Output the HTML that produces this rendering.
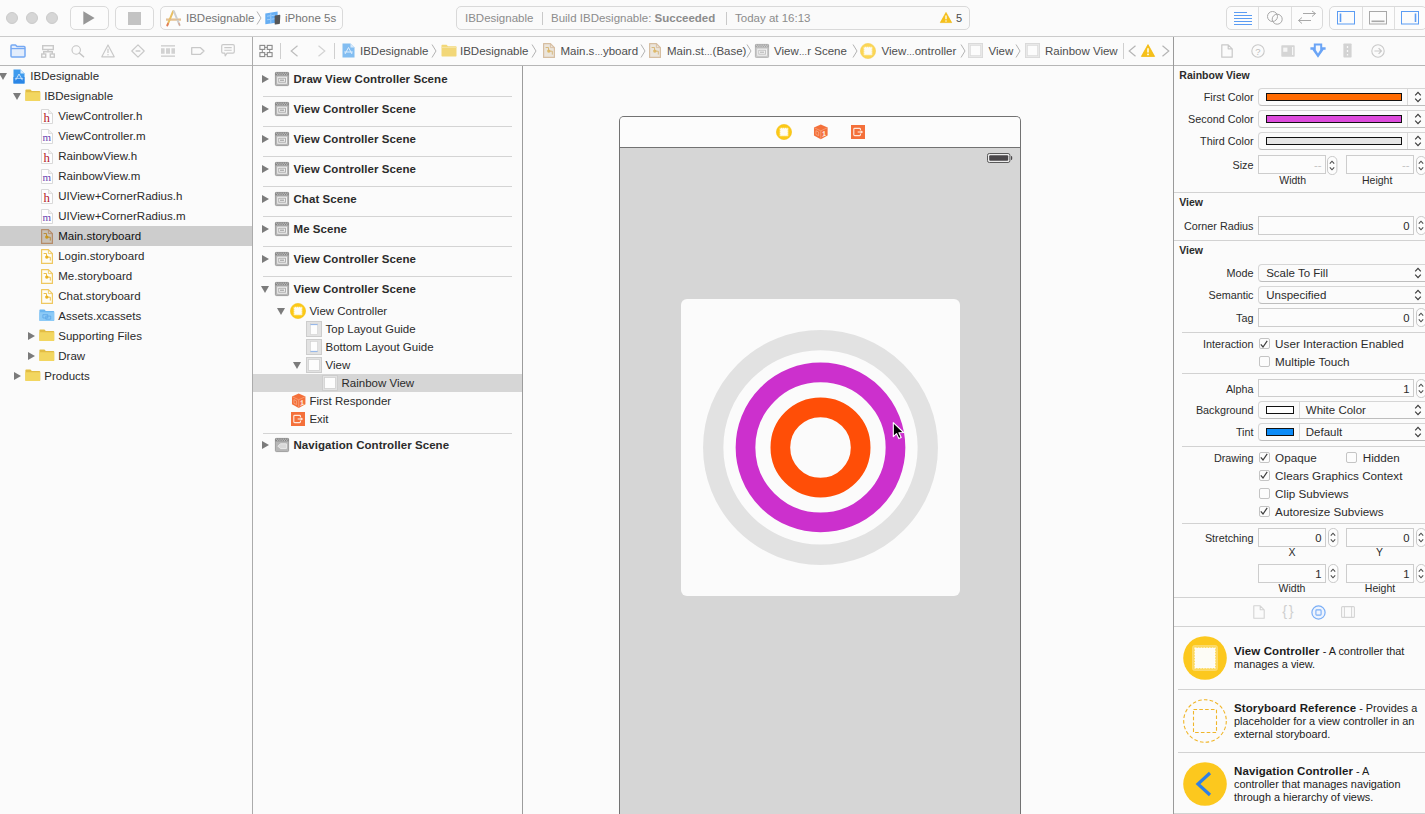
<!DOCTYPE html>
<html lang="en">
<head>
<meta charset="utf-8">
<title>IBDesignable — Main.storyboard</title>
<style>
*{box-sizing:border-box;margin:0;padding:0}
html,body{width:1425px;height:814px;overflow:hidden}
body{position:relative;background:#fbfbfb;font-family:"Liberation Sans",sans-serif;font-size:12px;color:#262626;-webkit-font-smoothing:antialiased}
.abs{position:absolute}
.t{position:absolute;white-space:nowrap;line-height:16px;height:16px}
svg{position:absolute;overflow:visible}
/* ---------- toolbar ---------- */
#toolbar{position:absolute;left:0;top:0;width:1425px;height:36px;background:#fbfbfb}
#tbline{position:absolute;left:0;top:36px;width:1425px;height:1px;background:#cbcbcb}
.tl{position:absolute;top:12px;width:12px;height:12px;border-radius:50%;background:#d6d6d6;border:1px solid #cbcbcb}
.tbtn{position:absolute;top:6px;height:24px;border:1px solid #dadada;border-radius:5px;background:#fcfcfc}
.tgrey{color:#8c8c8c}
#toolbar .t{font-size:11.5px}
.jb{top:6px;font-size:11.5px;color:#4e4e4e}
/* ---------- second bar ---------- */
#bar2{position:absolute;left:0;top:37px;width:1425px;height:28px;background:#fbfbfb}
#bar2line{position:absolute;left:0;top:65px;width:1425px;height:1px;background:#b6b6b6}
.vline{position:absolute;width:1px;background:#b9b9b9}
/* ---------- navigator ---------- */
#nav{position:absolute;left:0;top:66px;width:252px;height:748px;background:#fbfbfb}
.nrow{position:absolute;left:0;width:252px;height:20px}
.nrow .t{top:2px;font-size:11.5px;color:#2a2a2a;letter-spacing:0.04px}
.tri{position:absolute;width:0;height:0}
.tri.r{border-left:7px solid #7b7b7b;border-top:4.5px solid transparent;border-bottom:4.5px solid transparent}
.tri.d{border-top:7px solid #7b7b7b;border-left:4.5px solid transparent;border-right:4.5px solid transparent}
/* ---------- outline ---------- */
#outline{position:absolute;left:253px;top:66px;width:269px;height:748px;background:#fbfbfb}
.sep{position:absolute;left:10px;width:249px;height:1px;background:#d4d4d4}
.scene{position:absolute;left:40.5px;font-weight:bold;font-size:11.5px;letter-spacing:0.06px;color:#2b2b2b;white-space:nowrap;line-height:16px}
.orow{position:absolute;font-size:11.5px;color:#2b2b2b;white-space:nowrap;line-height:16px}
/* ---------- canvas ---------- */
#canvas{position:absolute;left:523px;top:66px;width:651px;height:748px;background:#fbfbfb;overflow:hidden}
/* ---------- inspector ---------- */
#insp{position:absolute;left:1174px;top:66px;width:251px;overflow:hidden;height:748px;background:#fbfbfb}
.lab{position:absolute;font-size:10.8px;color:#2b2b2b;white-space:nowrap;line-height:14px;text-align:right;left:0;width:79px}
.lab2{position:absolute;font-size:10.5px;color:#2b2b2b;white-space:nowrap;line-height:14px}
.hdr{position:absolute;left:4px;font-size:10.5px;font-weight:bold;color:#2b2b2b;line-height:14px;white-space:nowrap}
.fld{position:absolute;height:17px;border:1px solid #cdcdcd;background:#fcfcfc;font-size:11.3px;line-height:15px;text-align:right;padding-right:3.2px;padding-top:1px;color:#2b2b2b}
.pop{position:absolute;height:17px;border:1px solid #d6d6d6;border-bottom-color:#bdbdbd;border-radius:4px;background:#fbfbfb;font-size:12px;line-height:15px;color:#2b2b2b;padding-left:7px;white-space:nowrap}
.isep{position:absolute;height:1px;background:#d2d2d2}
.lib{font-size:10.9px;line-height:15px;color:#1c1c1c}
.lib b{font-size:11.5px;letter-spacing:0.1px}
.cb{position:absolute;width:11px;height:11px;border:1px solid #c4c4c4;border-radius:2px;background:#fcfcfc}
</style>
</head>
<body>
<div id="toolbar">
  <div class="tl" style="left:6px"></div><div class="tl" style="left:26px"></div><div class="tl" style="left:46px"></div>
  <div class="tbtn" style="left:70px;width:39px"></div>
  <svg style="left:83px;top:11px" width="12" height="14" viewBox="0 0 12 14"><path d="M0.3 0.2 L11.6 7 L0.3 13.8 Z" fill="#979797"/></svg>
  <div class="tbtn" style="left:115px;width:39px"></div>
  <div class="abs" style="left:128px;top:11.5px;width:13px;height:13px;background:#c3c3c3"></div>
  <div class="tbtn" style="left:160px;width:183px"></div>
  <!-- scheme app icon -->
  <svg style="left:165px;top:10px" width="17" height="17" viewBox="0 0 17 17">
    <path d="M1 8.2 H16 V11 H1 Z" fill="#ecd2ae"/>
    <path d="M8.2 1.2 L2.4 15.2" stroke="#e9bf63" stroke-width="2" stroke-linecap="round" fill="none"/>
    <path d="M3 13.6 L2.2 15.6" stroke="#e2785c" stroke-width="1.6" stroke-linecap="round" fill="none"/>
    <path d="M8.8 1.2 L14.6 15.2" stroke="#cfcfcf" stroke-width="2" stroke-linecap="round" fill="none"/>
    <path d="M13.6 12.8 L14.8 15.6" stroke="#d9a48e" stroke-width="1.2" fill="none"/>
    <path d="M1 9.6 H16" stroke="#dcb88e" stroke-width="0.8" fill="none"/>
  </svg>
  <div class="t" style="left:186px;top:10px;color:#757575">IBDesignable</div>
  <svg style="left:256px;top:11px" width="6" height="14" viewBox="0 0 6 14"><path d="M1 0.5 L5 7 L1 13.5" stroke="#b4b4b4" stroke-width="1" fill="none"/></svg>
  <!-- simulator icon -->
  <svg style="left:265px;top:11px" width="16" height="14" viewBox="0 0 16 14">
    <path d="M0.3 2.4 L12.6 0.6 L12.6 11.6 L0.3 13.2 Z" fill="#66aef3"/>
    <path d="M2 5.2 L5 4.8 M6.5 4.6 L10 4.1 M2 8.8 L5 8.4 M6.5 8.2 L10 7.7 M5.8 2.5 V12" stroke="#9fcdf9" stroke-width="1"/>
    <path d="M10.2 4.6 L14.6 3.8 Q15.3 3.7 15.3 4.5 L14.9 12.2 Q14.9 12.9 14.2 13 L10.4 13.6 Q9.7 13.7 9.7 13 L9.6 5.4 Q9.6 4.7 10.2 4.6 Z" fill="#565656"/>
  </svg>
  <div class="t" style="left:285px;top:10px;color:#757575">iPhone 5s</div>

  <!-- activity view -->
  <div class="tbtn" style="left:456px;width:514px;background:#fafafa;border-color:#d9d9d9"></div>
  <div class="t tgrey" style="left:465px;top:10px">IBDesignable</div>
  <div class="abs" style="left:542px;top:12px;width:1px;height:13px;background:#c9c9c9"></div>
  <div class="t tgrey" style="left:551px;top:10px">Build IBDesignable: <b>Succeeded</b></div>
  <div class="abs" style="left:726px;top:12px;width:1px;height:13px;background:#c9c9c9"></div>
  <div class="t tgrey" style="left:735px;top:10px">Today at 16:13</div>
  <svg style="left:940px;top:12px" width="12" height="11" viewBox="0 0 12 11"><path d="M6 0.4 L11.7 10.6 L0.3 10.6 Z" fill="#f6c11a" stroke="#f0b400" stroke-width="0.6" stroke-linejoin="round"/><path d="M6 3.6 L6 7.2" stroke="#fff" stroke-width="1.3"/><circle cx="6" cy="8.9" r="0.75" fill="#fff"/></svg>
  <div class="t" style="left:956px;top:10px;font-size:11px;color:#4a4a4a">5</div>

  <!-- editor segmented -->
  <div class="tbtn" style="left:1226px;width:97px"></div>
  <div class="abs" style="left:1258px;top:7px;width:1px;height:22px;background:#dedede"></div>
  <div class="abs" style="left:1291px;top:7px;width:1px;height:22px;background:#dedede"></div>
  <svg style="left:1233px;top:11px" width="20" height="15" viewBox="0 0 20 15"><path d="M1 1.5 H14 M1 4.5 H19 M1 7.5 H19 M1 10.5 H19 M1 13.5 H19" stroke="#5b9cf3" stroke-width="1"/></svg>
  <svg style="left:1266px;top:10px" width="18" height="16" viewBox="0 0 18 16"><circle cx="6.5" cy="6.5" r="5" stroke="#a8a8a8" stroke-width="1" fill="none"/><circle cx="11.2" cy="9.2" r="5" stroke="#a8a8a8" stroke-width="1" fill="none"/></svg>
  <svg style="left:1297px;top:11px" width="20" height="14" viewBox="0 0 20 14"><path d="M6 2.5 H18.5 M15 0 L18.5 2.5 L15 5.5 M1.5 9.5 H14 M5 6.5 L1.5 9.5 L5 12.5" stroke="#a8a8a8" stroke-width="1" fill="none"/></svg>
  <!-- panels segmented -->
  <div class="tbtn" style="left:1329px;width:98px"></div>
  <div class="abs" style="left:1362px;top:7px;width:1px;height:22px;background:#dedede"></div>
  <div class="abs" style="left:1394px;top:7px;width:1px;height:22px;background:#dedede"></div>
  <svg style="left:1337px;top:11px" width="18" height="14" viewBox="0 0 18 14"><rect x="0.5" y="0.5" width="17" height="12.5" stroke="#5b9cf3" fill="none"/><path d="M3.5 2.5 V11" stroke="#5b9cf3" stroke-width="1.6"/></svg>
  <svg style="left:1369px;top:11px" width="18" height="14" viewBox="0 0 18 14"><rect x="0.5" y="0.5" width="17" height="12.5" stroke="#a8a8a8" fill="none"/><path d="M2.5 10.3 H15.5" stroke="#a8a8a8" stroke-width="1.6"/></svg>
  <svg style="left:1401px;top:11px" width="18" height="14" viewBox="0 0 18 14"><rect x="0.5" y="0.5" width="17" height="12.5" stroke="#5b9cf3" fill="none"/><path d="M14.5 2.5 V11" stroke="#5b9cf3" stroke-width="1.6"/></svg>
</div>
<div id="tbline"></div>

<div id="bar2">
  <!-- navigator selector icons (coords relative to bar2: top=37) -->
  <svg style="left:10px;top:7px" width="16" height="14" viewBox="0 0 16 14"><path d="M1 2 Q1 1 2 1 H5.5 L7 2.6 H14 Q15 2.6 15 3.6 V12 Q15 13 14 13 H2 Q1 13 1 12 Z" fill="#e3edfc" stroke="#76a9f3" stroke-width="1.5" stroke-linejoin="round"/><path d="M1 4.6 H15" stroke="#76a9f3" stroke-width="1.2"/></svg>
  <svg style="left:41px;top:8px" width="14" height="13" viewBox="0 0 14 13"><rect x="1.7" y="0.7" width="10.6" height="3.8" fill="none" stroke="#c9c9c9" stroke-width="1.4"/><path d="M7 4.5 V6.7 M2.7 9 V6.7 H11.3 V9" fill="none" stroke="#c9c9c9" stroke-width="1.4"/><rect x="0.7" y="9" width="4" height="3.2" fill="none" stroke="#c9c9c9" stroke-width="1.4"/><rect x="9.3" y="9" width="4" height="3.2" fill="none" stroke="#c9c9c9" stroke-width="1.4"/></svg>
  <svg style="left:71px;top:8px" width="14" height="13" viewBox="0 0 14 13"><circle cx="5.2" cy="5" r="4.2" fill="none" stroke="#c4c4c4" stroke-width="1.1"/><path d="M8.3 8 L12.6 11.8" stroke="#c4c4c4" stroke-width="1.5" stroke-linecap="round"/></svg>
  <svg style="left:101px;top:7px" width="14" height="14" viewBox="0 0 14 14"><path d="M7 1 L13.2 12.8 H0.8 Z" fill="none" stroke="#c9c9c9" stroke-width="1.2" stroke-linejoin="round"/><path d="M7 4.8 V9" stroke="#c9c9c9" stroke-width="1.2"/><circle cx="7" cy="10.8" r="0.7" fill="#c9c9c9"/></svg>
  <svg style="left:131px;top:7px" width="14" height="14" viewBox="0 0 14 14"><path d="M7 0.9 L13.2 7 L7 13.1 L0.8 7 Z" fill="none" stroke="#c9c9c9" stroke-width="1.2" stroke-linejoin="round"/><path d="M4.6 7 H9.4" stroke="#c9c9c9" stroke-width="1.4"/></svg>
  <svg style="left:161px;top:8px" width="14" height="12" viewBox="0 0 14 12"><path d="M0 0.8 H14 M0 11.2 H14" stroke="#c9c9c9" stroke-width="1.2"/><path d="M0 3.2 H3.6 V8.8 H0 Z M5 3.2 H9 V8.8 H5 Z M10.4 3.2 H14 V8.8 H10.4 Z" fill="#d2d2d2"/></svg>
  <svg style="left:191px;top:10px" width="14" height="8" viewBox="0 0 14 8"><path d="M0.7 0.7 H9.5 L13 4 L9.5 7.3 H0.7 Z" fill="none" stroke="#c9c9c9" stroke-width="1.3" stroke-linejoin="round"/></svg>
  <svg style="left:221px;top:7px" width="14" height="13" viewBox="0 0 14 13"><path d="M2 0.7 H12 Q13.3 0.7 13.3 2 V7.8 Q13.3 9.1 12 9.1 H6 L4.2 11.8 L3.8 9.1 H2 Q0.7 9.1 0.7 7.8 V2 Q0.7 0.7 2 0.7 Z" fill="none" stroke="#c9c9c9" stroke-width="1.2" stroke-linejoin="round"/><path d="M3.3 3.6 H10.7 M3.3 6.2 H10.7" stroke="#c9c9c9" stroke-width="1.1"/></svg>

  <!-- jump bar -->
  <svg style="left:259px;top:7px" width="14" height="14" viewBox="0 0 14 14"><rect x="0.9" y="1.4" width="4.8" height="4" fill="none" stroke="#8a8a8a" stroke-width="1.1"/><rect x="8.3" y="1.4" width="4.8" height="4" fill="none" stroke="#8a8a8a" stroke-width="1.1"/><rect x="0.9" y="8.6" width="4.8" height="4" fill="none" stroke="#8a8a8a" stroke-width="1.1"/><rect x="8.3" y="8.6" width="4.8" height="4" fill="none" stroke="#8a8a8a" stroke-width="1.1"/><path d="M5.7 3.4 H8.3 M5.7 10.6 H8.3 M3.3 5.4 V8.6 M10.7 5.4 V8.6" stroke="#8a8a8a" stroke-width="1"/></svg>
  <div class="abs" style="left:280px;top:6px;width:1px;height:16px;background:#cfcfcf"></div>
  <svg style="left:290px;top:8px" width="9" height="12" viewBox="0 0 9 12"><path d="M7.5 0.8 L1.2 6 L7.5 11.2" fill="none" stroke="#bdbdbd" stroke-width="1.2"/></svg>
  <svg style="left:317px;top:8px" width="9" height="12" viewBox="0 0 9 12"><path d="M1.5 0.8 L7.8 6 L1.5 11.2" fill="none" stroke="#d3d3d3" stroke-width="1.2"/></svg>
  <div class="abs" style="left:334px;top:6px;width:1px;height:16px;background:#cfcfcf"></div>
  <!-- project icon -->
  <svg style="left:342px;top:6px;opacity:.75" width="13" height="15" viewBox="0 0 13 15"><path d="M0.5 0.5 H8.5 L12.5 4.5 V14.5 H0.5 Z" fill="#5aa9ee"/><path d="M8.5 0.5 L12.5 4.5 H8.5 Z" fill="#cfe5fa"/><path d="M3 11 L6.5 4.5 L10 11 M2.2 9 H10.8" stroke="#d6ebff" stroke-width="1" fill="none"/></svg>
  <div class="t jb" style="left:360px">IBDesignable</div>
  <svg style="left:431px;top:7px" width="6" height="14" viewBox="0 0 6 14"><path d="M1 0.5 L5 7 L1 13.5" fill="none" stroke="#b3b3b3" stroke-width="1"/></svg>
  <svg style="left:441px;top:7px;opacity:.8" width="16" height="13" viewBox="0 0 16 13"><path d="M0.5 1.5 Q0.5 0.8 1.2 0.8 H5.5 L7 2.3 H14.8 Q15.5 2.3 15.5 3 V11.8 Q15.5 12.5 14.8 12.5 H1.2 Q0.5 12.5 0.5 11.8 Z" fill="#f0cf58"/><path d="M0.5 3.4 H15.5" stroke="#f7e08e" stroke-width="1"/></svg>
  <div class="t jb" style="left:460px">IBDesignable</div>
  <svg style="left:531px;top:7px" width="6" height="14" viewBox="0 0 6 14"><path d="M1 0.5 L5 7 L1 13.5" fill="none" stroke="#b3b3b3" stroke-width="1"/></svg>
  <div class="abs" style="left:0;top:0;opacity:.72"><svg style="left:543px;top:6px" width="12" height="15" viewBox="0 0 12 15"><path d="M0.6 0.6 H7.4 L11.4 4.6 V14.4 H0.6 Z" fill="#e6ddd0" stroke="#c9a77f" stroke-width="1.2" stroke-linejoin="round"/><path d="M7.4 0.6 V4.6 H11.4" fill="none" stroke="#c9a77f" stroke-width="0.9"/><path d="M2.6 4.5 H5.5 V8 M6 8.2 H9.3 V11.6" fill="none" stroke="#c79a3f" stroke-width="0.9"/><circle cx="5.8" cy="8.1" r="1.7" fill="#d3a130"/></svg></div>
  <div class="t jb" style="left:560.5px">Main.s<span style="font-size:8.5px">…</span>yboard</div>
  <svg style="left:640px;top:7px" width="6" height="14" viewBox="0 0 6 14"><path d="M1 0.5 L5 7 L1 13.5" fill="none" stroke="#b3b3b3" stroke-width="1"/></svg>
  <div class="abs" style="left:0;top:0;opacity:.72"><svg style="left:649px;top:6px" width="12" height="15" viewBox="0 0 12 15"><path d="M0.6 0.6 H7.4 L11.4 4.6 V14.4 H0.6 Z" fill="#e6ddd0" stroke="#c9a77f" stroke-width="1.2" stroke-linejoin="round"/><path d="M7.4 0.6 V4.6 H11.4" fill="none" stroke="#c9a77f" stroke-width="0.9"/><path d="M2.6 4.5 H5.5 V8 M6 8.2 H9.3 V11.6" fill="none" stroke="#c79a3f" stroke-width="0.9"/><circle cx="5.8" cy="8.1" r="1.7" fill="#d3a130"/></svg></div>
  <div class="t jb" style="left:667px">Main.st<span style="font-size:8.5px">…</span>(Base)</div>
  <svg style="left:746px;top:7px" width="6" height="14" viewBox="0 0 6 14"><path d="M1 0.5 L5 7 L1 13.5" fill="none" stroke="#b3b3b3" stroke-width="1"/></svg>
  <div class="abs" style="left:0;top:0;opacity:.72"><svg style="left:755px;top:7px" width="14" height="14" viewBox="0 0 14 14"><rect x="0.4" y="0.4" width="13.2" height="13.2" rx="1" fill="#b6b6b6" stroke="#8f8f8f" stroke-width="0.8"/><rect x="0.4" y="0.4" width="13.2" height="2.9" fill="#7c7c7c"/><path d="M1 1.2 H13 M1.9 2.3 H13" stroke="#dcdcdc" stroke-width="0.9" stroke-dasharray="0.9 0.9"/><rect x="2.8" y="5.2" width="8.6" height="6" fill="#a8a8a8" stroke="#f6f6f6" stroke-width="1"/><rect x="4.6" y="7.1" width="5" height="2.2" fill="none" stroke="#f6f6f6" stroke-width="0.8"/></svg></div>
  <div class="t jb" style="left:774px">View<span style="font-size:8.5px">…</span>r Scene</div>
  <svg style="left:852px;top:7px" width="6" height="14" viewBox="0 0 6 14"><path d="M1 0.5 L5 7 L1 13.5" fill="none" stroke="#b3b3b3" stroke-width="1"/></svg>
  <div class="abs" style="left:0;top:0;opacity:.72"><svg style="left:860px;top:6px" width="16" height="16" viewBox="0 0 16 16"><circle cx="8" cy="8" r="7.6" fill="#fcc916" stroke="#f4bd10" stroke-width="0.6"/><rect x="3.7" y="3.7" width="8.6" height="8.6" rx="0.6" fill="#fffdf4"/><rect x="3.9" y="3.9" width="8.2" height="8.2" fill="none" stroke="#fcc916" stroke-width="0.9" stroke-dasharray="0.9 1.1"/></svg></div>
  <div class="t jb" style="left:881.5px">View<span style="font-size:8.5px">…</span>ontroller</div>
  <svg style="left:960px;top:7px" width="6" height="14" viewBox="0 0 6 14"><path d="M1 0.5 L5 7 L1 13.5" fill="none" stroke="#b3b3b3" stroke-width="1"/></svg>
  <div class="abs" style="left:0;top:0;opacity:.72"><svg style="left:968px;top:6px" width="15" height="15" viewBox="0 0 16 16"><rect x="0.5" y="0.5" width="15" height="15" fill="#e2e2e2" stroke="#cdcdcd" stroke-width="1"/><rect x="2.5" y="2.5" width="11" height="11" fill="#fdfdfd" stroke="#d0d0d0" stroke-width="0.8"/></svg></div>
  <div class="t jb" style="left:988.5px">View</div>
  <svg style="left:1015px;top:7px" width="6" height="14" viewBox="0 0 6 14"><path d="M1 0.5 L5 7 L1 13.5" fill="none" stroke="#b3b3b3" stroke-width="1"/></svg>
  <div class="abs" style="left:0;top:0;opacity:.72"><svg style="left:1025px;top:6px" width="15" height="15" viewBox="0 0 16 16"><rect x="0.5" y="0.5" width="15" height="15" fill="#e2e2e2" stroke="#cdcdcd" stroke-width="1"/><rect x="2.5" y="2.5" width="11" height="11" fill="#fdfdfd" stroke="#d0d0d0" stroke-width="0.8"/></svg></div>
  <div class="t jb" style="left:1045px">Rainbow View</div>
  <div class="abs" style="left:1123px;top:6px;width:1px;height:16px;background:#cfcfcf"></div>
  <svg style="left:1128px;top:8px" width="9" height="12" viewBox="0 0 9 12"><path d="M7.5 0.8 L1.2 6 L7.5 11.2" fill="none" stroke="#b5b5b5" stroke-width="1.2"/></svg>
  <svg style="left:1141px;top:7px" width="14" height="13" viewBox="0 0 12 11"><path d="M6 0.4 L11.7 10.6 L0.3 10.6 Z" fill="#f6c11a" stroke="#f0b400" stroke-width="0.6" stroke-linejoin="round"/><path d="M6 3.6 L6 7.2" stroke="#fff" stroke-width="1.3"/><circle cx="6" cy="8.9" r="0.75" fill="#fff"/></svg>
  <svg style="left:1161px;top:8px" width="9" height="12" viewBox="0 0 9 12"><path d="M1.5 0.8 L7.8 6 L1.5 11.2" fill="none" stroke="#b5b5b5" stroke-width="1.2"/></svg>

  <!-- inspector selector icons -->
  <svg style="left:1221px;top:7px" width="12" height="14" viewBox="0 0 12 14"><path d="M0.8 0.8 H7.2 L11.2 4.8 V13.2 H0.8 Z M7.2 0.8 V4.8 H11.2" fill="none" stroke="#c9c9c9" stroke-width="1.2" stroke-linejoin="round"/></svg>
  <svg style="left:1251px;top:7px" width="14" height="14" viewBox="0 0 14 14"><circle cx="7" cy="7" r="6.2" fill="none" stroke="#c9c9c9" stroke-width="1.1"/><text x="7" y="10.6" font-family="Liberation Sans, sans-serif" font-size="9.5" text-anchor="middle" fill="#bdbdbd">?</text></svg>
  <svg style="left:1281px;top:8px" width="14" height="12" viewBox="0 0 14 12"><rect x="0.3" y="0.3" width="13.4" height="11.4" rx="0.8" fill="#d5d5d5"/><rect x="2.2" y="2.6" width="4.2" height="4.2" fill="#f6f6f6"/><rect x="11" y="2" width="1.2" height="8" fill="#f6f6f6"/></svg>
  <svg style="left:1310px;top:6px" width="16" height="15" viewBox="0 0 16 15"><path d="M3.8 0.4 H12.2 V4.2 H15.6 V6.8 H13.6 L8 14.8 L2.4 6.8 H0.4 V4.2 H3.8 Z" fill="#6aa4f6"/><path d="M5.8 2.4 H10.2 V7 L8 10.4 L5.8 7 Z" fill="#f4f8fe"/></svg>
  <svg style="left:1343px;top:6px" width="9" height="15" viewBox="0 0 9 15"><rect x="0.4" y="0.4" width="8.2" height="14.2" rx="0.8" fill="#d3d3d3"/><path d="M4.5 3 V5 M4.5 7 V9 M4.5 11 V12.5" stroke="#f8f8f8" stroke-width="1.3"/></svg>
  <svg style="left:1371px;top:7px" width="14" height="14" viewBox="0 0 14 14"><circle cx="7" cy="7" r="6.2" fill="none" stroke="#c9c9c9" stroke-width="1.1"/><path d="M3.4 7 H10.2 M7.6 4.2 L10.4 7 L7.6 9.8" fill="none" stroke="#c9c9c9" stroke-width="1.2"/></svg>
</div>
<div id="bar2line"></div>

<div id="nav">
<div class="nrow" style="top:0px"><div class="tri d" style="left:-1.5px;top:7px"></div><svg style="left:13px;top:2.5px" width="12" height="15" viewBox="0 0 12 15"><path d="M0.5 0.5 H7.5 L11.5 4.5 V14.5 H0.5 Z" fill="#3f9bee"/><path d="M0.5 8 H11.5 V14.5 H0.5 Z" fill="#2b86e6"/><path d="M7.5 0.5 L11.5 4.5 H7.5 Z" fill="#d8ebfb"/><path d="M2.6 11.2 L6 5 L9.4 11.2 M1.8 9.3 H10.2" stroke="#cfe6fc" stroke-width="0.9" fill="none"/></svg><div class="t" style="left:30.2px">IBDesignable</div></div>
<div class="nrow" style="top:20px"><div class="tri d" style="left:12.5px;top:7px"></div><svg style="left:24.9px;top:3.3px" width="15.6" height="12.3" preserveAspectRatio="none" viewBox="0 0 16 13"><path d="M0.4 1.4 Q0.4 0.6 1.2 0.6 H5.6 L7 2 H14.8 Q15.6 2 15.6 2.8 V11.8 Q15.6 12.6 14.8 12.6 H1.2 Q0.4 12.6 0.4 11.8 Z" fill="#e2bd44"/><path d="M0.4 3.4 H15.6 V11.8 Q15.6 12.6 14.8 12.6 H1.2 Q0.4 12.6 0.4 11.8 Z" fill="#f2d660"/></svg><div class="t" style="left:44.2px">IBDesignable</div></div>
<div class="nrow" style="top:40px"><svg style="left:41px;top:2.5px" width="12" height="15" viewBox="0 0 12 15"><path d="M0.5 0.5 H7.5 L11.5 4.5 V14.5 H0.5 Z" fill="#fefefe" stroke="#d9d9d9" stroke-width="1" stroke-linejoin="round"/><path d="M7.5 0.5 V4.5 H11.5" fill="#f0f0f0" stroke="#d9d9d9" stroke-width="0.8"/><text x="5.6" y="12.7" font-family="Liberation Serif, serif" font-size="12.8" fill="#b3202a" text-anchor="middle">h</text></svg><div class="t" style="left:58.2px">ViewController.h</div></div>
<div class="nrow" style="top:60px"><svg style="left:41px;top:2.5px" width="12" height="15" viewBox="0 0 12 15"><path d="M0.5 0.5 H7.5 L11.5 4.5 V14.5 H0.5 Z" fill="#fefefe" stroke="#d9d9d9" stroke-width="1" stroke-linejoin="round"/><path d="M7.5 0.5 V4.5 H11.5" fill="#f0f0f0" stroke="#d9d9d9" stroke-width="0.8"/><text x="5.9" y="12.2" font-family="Liberation Serif, serif" font-size="11" fill="#6a3fb0" text-anchor="middle">m</text></svg><div class="t" style="left:58.2px">ViewController.m</div></div>
<div class="nrow" style="top:80px"><svg style="left:41px;top:2.5px" width="12" height="15" viewBox="0 0 12 15"><path d="M0.5 0.5 H7.5 L11.5 4.5 V14.5 H0.5 Z" fill="#fefefe" stroke="#d9d9d9" stroke-width="1" stroke-linejoin="round"/><path d="M7.5 0.5 V4.5 H11.5" fill="#f0f0f0" stroke="#d9d9d9" stroke-width="0.8"/><text x="5.6" y="12.7" font-family="Liberation Serif, serif" font-size="12.8" fill="#b3202a" text-anchor="middle">h</text></svg><div class="t" style="left:58.2px">RainbowView.h</div></div>
<div class="nrow" style="top:100px"><svg style="left:41px;top:2.5px" width="12" height="15" viewBox="0 0 12 15"><path d="M0.5 0.5 H7.5 L11.5 4.5 V14.5 H0.5 Z" fill="#fefefe" stroke="#d9d9d9" stroke-width="1" stroke-linejoin="round"/><path d="M7.5 0.5 V4.5 H11.5" fill="#f0f0f0" stroke="#d9d9d9" stroke-width="0.8"/><text x="5.9" y="12.2" font-family="Liberation Serif, serif" font-size="11" fill="#6a3fb0" text-anchor="middle">m</text></svg><div class="t" style="left:58.2px">RainbowView.m</div></div>
<div class="nrow" style="top:120px"><svg style="left:41px;top:2.5px" width="12" height="15" viewBox="0 0 12 15"><path d="M0.5 0.5 H7.5 L11.5 4.5 V14.5 H0.5 Z" fill="#fefefe" stroke="#d9d9d9" stroke-width="1" stroke-linejoin="round"/><path d="M7.5 0.5 V4.5 H11.5" fill="#f0f0f0" stroke="#d9d9d9" stroke-width="0.8"/><text x="5.6" y="12.7" font-family="Liberation Serif, serif" font-size="12.8" fill="#b3202a" text-anchor="middle">h</text></svg><div class="t" style="left:58.2px">UIView+CornerRadius.h</div></div>
<div class="nrow" style="top:140px"><svg style="left:41px;top:2.5px" width="12" height="15" viewBox="0 0 12 15"><path d="M0.5 0.5 H7.5 L11.5 4.5 V14.5 H0.5 Z" fill="#fefefe" stroke="#d9d9d9" stroke-width="1" stroke-linejoin="round"/><path d="M7.5 0.5 V4.5 H11.5" fill="#f0f0f0" stroke="#d9d9d9" stroke-width="0.8"/><text x="5.9" y="12.2" font-family="Liberation Serif, serif" font-size="11" fill="#6a3fb0" text-anchor="middle">m</text></svg><div class="t" style="left:58.2px">UIView+CornerRadius.m</div></div>
<div class="nrow" style="top:160px;background:#cdcdcd"><svg style="left:41px;top:2.5px" width="12" height="15" viewBox="0 0 12 15"><path d="M0.6 0.6 H7.4 L11.4 4.6 V14.4 H0.6 Z" fill="#c9c2b8" stroke="#b48b68" stroke-width="1.2" stroke-linejoin="round"/><path d="M7.4 0.6 V4.6 H11.4" fill="none" stroke="#b48b68" stroke-width="0.9"/><path d="M2.6 4.5 H5.5 V8 M6 8.2 H9.3 V11.6" fill="none" stroke="#b8882c" stroke-width="0.9"/><circle cx="5.8" cy="8.1" r="1.7" fill="#c8951a"/></svg><div class="t" style="left:58.2px;color:#111">Main.storyboard</div></div>
<div class="nrow" style="top:180px"><svg style="left:41px;top:2.5px" width="12" height="15" viewBox="0 0 12 15"><path d="M0.6 0.6 H7.4 L11.4 4.6 V14.4 H0.6 Z" fill="#fffdf5" stroke="#efc860" stroke-width="1.2" stroke-linejoin="round"/><path d="M7.4 0.6 V4.6 H11.4" fill="none" stroke="#efc860" stroke-width="0.9"/><path d="M2.6 4.5 H5.5 V8 M6 8.2 H9.3 V11.6" fill="none" stroke="#eab93a" stroke-width="0.9"/><circle cx="5.8" cy="8.1" r="1.7" fill="#eab220"/></svg><div class="t" style="left:58.2px">Login.storyboard</div></div>
<div class="nrow" style="top:200px"><svg style="left:41px;top:2.5px" width="12" height="15" viewBox="0 0 12 15"><path d="M0.6 0.6 H7.4 L11.4 4.6 V14.4 H0.6 Z" fill="#fffdf5" stroke="#efc860" stroke-width="1.2" stroke-linejoin="round"/><path d="M7.4 0.6 V4.6 H11.4" fill="none" stroke="#efc860" stroke-width="0.9"/><path d="M2.6 4.5 H5.5 V8 M6 8.2 H9.3 V11.6" fill="none" stroke="#eab93a" stroke-width="0.9"/><circle cx="5.8" cy="8.1" r="1.7" fill="#eab220"/></svg><div class="t" style="left:58.2px">Me.storyboard</div></div>
<div class="nrow" style="top:220px"><svg style="left:41px;top:2.5px" width="12" height="15" viewBox="0 0 12 15"><path d="M0.6 0.6 H7.4 L11.4 4.6 V14.4 H0.6 Z" fill="#fffdf5" stroke="#efc860" stroke-width="1.2" stroke-linejoin="round"/><path d="M7.4 0.6 V4.6 H11.4" fill="none" stroke="#efc860" stroke-width="0.9"/><path d="M2.6 4.5 H5.5 V8 M6 8.2 H9.3 V11.6" fill="none" stroke="#eab93a" stroke-width="0.9"/><circle cx="5.8" cy="8.1" r="1.7" fill="#eab220"/></svg><div class="t" style="left:58.2px">Chat.storyboard</div></div>
<div class="nrow" style="top:240px"><svg style="left:39.2px;top:3.3px" width="15.6" height="12.3" preserveAspectRatio="none" viewBox="0 0 16 13"><path d="M0.4 1.4 Q0.4 0.6 1.2 0.6 H5.6 L7 2 H14.8 Q15.6 2 15.6 2.8 V11.8 Q15.6 12.6 14.8 12.6 H1.2 Q0.4 12.6 0.4 11.8 Z" fill="#6bb6f0"/><path d="M0.4 3.4 H15.6 V11.8 Q15.6 12.6 14.8 12.6 H1.2 Q0.4 12.6 0.4 11.8 Z" fill="#8ccaf6"/><path d="M4 6 H9 V9.5 H4 Z M7 7.5 H12 V10.8 H7 Z" fill="none" stroke="#5aa5e6" stroke-width="0.8"/></svg><div class="t" style="left:58.2px">Assets.xcassets</div></div>
<div class="nrow" style="top:260px"><div class="tri r" style="left:27.5px;top:5.5px"></div><svg style="left:39.2px;top:3.3px" width="15.6" height="12.3" preserveAspectRatio="none" viewBox="0 0 16 13"><path d="M0.4 1.4 Q0.4 0.6 1.2 0.6 H5.6 L7 2 H14.8 Q15.6 2 15.6 2.8 V11.8 Q15.6 12.6 14.8 12.6 H1.2 Q0.4 12.6 0.4 11.8 Z" fill="#e2bd44"/><path d="M0.4 3.4 H15.6 V11.8 Q15.6 12.6 14.8 12.6 H1.2 Q0.4 12.6 0.4 11.8 Z" fill="#f2d660"/></svg><div class="t" style="left:58.2px">Supporting Files</div></div>
<div class="nrow" style="top:280px"><div class="tri r" style="left:27.5px;top:5.5px"></div><svg style="left:39.2px;top:3.3px" width="15.6" height="12.3" preserveAspectRatio="none" viewBox="0 0 16 13"><path d="M0.4 1.4 Q0.4 0.6 1.2 0.6 H5.6 L7 2 H14.8 Q15.6 2 15.6 2.8 V11.8 Q15.6 12.6 14.8 12.6 H1.2 Q0.4 12.6 0.4 11.8 Z" fill="#e2bd44"/><path d="M0.4 3.4 H15.6 V11.8 Q15.6 12.6 14.8 12.6 H1.2 Q0.4 12.6 0.4 11.8 Z" fill="#f2d660"/></svg><div class="t" style="left:58.2px">Draw</div></div>
<div class="nrow" style="top:300px"><div class="tri r" style="left:13.5px;top:5.5px"></div><svg style="left:24.9px;top:3.3px" width="15.6" height="12.3" preserveAspectRatio="none" viewBox="0 0 16 13"><path d="M0.4 1.4 Q0.4 0.6 1.2 0.6 H5.6 L7 2 H14.8 Q15.6 2 15.6 2.8 V11.8 Q15.6 12.6 14.8 12.6 H1.2 Q0.4 12.6 0.4 11.8 Z" fill="#e2bd44"/><path d="M0.4 3.4 H15.6 V11.8 Q15.6 12.6 14.8 12.6 H1.2 Q0.4 12.6 0.4 11.8 Z" fill="#f2d660"/></svg><div class="t" style="left:44.2px">Products</div></div>
</div>
<div class="vline" style="left:252px;top:37px;height:777px;background:#ababab"></div>

<div id="outline">
<div class="tri r" style="left:9px;top:8.5px"></div>
<svg style="left:22px;top:6px" width="14" height="14" viewBox="0 0 14 14"><rect x="0.4" y="0.4" width="13.2" height="13.2" rx="1" fill="#b6b6b6" stroke="#8f8f8f" stroke-width="0.8"/><rect x="0.4" y="0.4" width="13.2" height="2.9" fill="#7c7c7c"/><path d="M1 1.2 H13 M1.9 2.3 H13" stroke="#dcdcdc" stroke-width="0.9" stroke-dasharray="0.9 0.9"/><rect x="2.8" y="5.2" width="8.6" height="6" fill="#a8a8a8" stroke="#f6f6f6" stroke-width="1"/><rect x="4.6" y="7.1" width="5" height="2.2" fill="none" stroke="#f6f6f6" stroke-width="0.8"/></svg>
<div class="scene" style="top:5px">Draw View Controller Scene</div>
<div class="sep" style="top:30px"></div>
<div class="tri r" style="left:9px;top:38.5px"></div>
<svg style="left:22px;top:36px" width="14" height="14" viewBox="0 0 14 14"><rect x="0.4" y="0.4" width="13.2" height="13.2" rx="1" fill="#b6b6b6" stroke="#8f8f8f" stroke-width="0.8"/><rect x="0.4" y="0.4" width="13.2" height="2.9" fill="#7c7c7c"/><path d="M1 1.2 H13 M1.9 2.3 H13" stroke="#dcdcdc" stroke-width="0.9" stroke-dasharray="0.9 0.9"/><rect x="2.8" y="5.2" width="8.6" height="6" fill="#a8a8a8" stroke="#f6f6f6" stroke-width="1"/><rect x="4.6" y="7.1" width="5" height="2.2" fill="none" stroke="#f6f6f6" stroke-width="0.8"/></svg>
<div class="scene" style="top:35px">View Controller Scene</div>
<div class="sep" style="top:60px"></div>
<div class="tri r" style="left:9px;top:68.5px"></div>
<svg style="left:22px;top:66px" width="14" height="14" viewBox="0 0 14 14"><rect x="0.4" y="0.4" width="13.2" height="13.2" rx="1" fill="#b6b6b6" stroke="#8f8f8f" stroke-width="0.8"/><rect x="0.4" y="0.4" width="13.2" height="2.9" fill="#7c7c7c"/><path d="M1 1.2 H13 M1.9 2.3 H13" stroke="#dcdcdc" stroke-width="0.9" stroke-dasharray="0.9 0.9"/><rect x="2.8" y="5.2" width="8.6" height="6" fill="#a8a8a8" stroke="#f6f6f6" stroke-width="1"/><rect x="4.6" y="7.1" width="5" height="2.2" fill="none" stroke="#f6f6f6" stroke-width="0.8"/></svg>
<div class="scene" style="top:65px">View Controller Scene</div>
<div class="sep" style="top:90px"></div>
<div class="tri r" style="left:9px;top:98.5px"></div>
<svg style="left:22px;top:96px" width="14" height="14" viewBox="0 0 14 14"><rect x="0.4" y="0.4" width="13.2" height="13.2" rx="1" fill="#b6b6b6" stroke="#8f8f8f" stroke-width="0.8"/><rect x="0.4" y="0.4" width="13.2" height="2.9" fill="#7c7c7c"/><path d="M1 1.2 H13 M1.9 2.3 H13" stroke="#dcdcdc" stroke-width="0.9" stroke-dasharray="0.9 0.9"/><rect x="2.8" y="5.2" width="8.6" height="6" fill="#a8a8a8" stroke="#f6f6f6" stroke-width="1"/><rect x="4.6" y="7.1" width="5" height="2.2" fill="none" stroke="#f6f6f6" stroke-width="0.8"/></svg>
<div class="scene" style="top:95px">View Controller Scene</div>
<div class="sep" style="top:120px"></div>
<div class="tri r" style="left:9px;top:128.5px"></div>
<svg style="left:22px;top:126px" width="14" height="14" viewBox="0 0 14 14"><rect x="0.4" y="0.4" width="13.2" height="13.2" rx="1" fill="#b6b6b6" stroke="#8f8f8f" stroke-width="0.8"/><rect x="0.4" y="0.4" width="13.2" height="2.9" fill="#7c7c7c"/><path d="M1 1.2 H13 M1.9 2.3 H13" stroke="#dcdcdc" stroke-width="0.9" stroke-dasharray="0.9 0.9"/><rect x="2.8" y="5.2" width="8.6" height="6" fill="#a8a8a8" stroke="#f6f6f6" stroke-width="1"/><rect x="4.6" y="7.1" width="5" height="2.2" fill="none" stroke="#f6f6f6" stroke-width="0.8"/></svg>
<div class="scene" style="top:125px">Chat Scene</div>
<div class="sep" style="top:150px"></div>
<div class="tri r" style="left:9px;top:158.5px"></div>
<svg style="left:22px;top:156px" width="14" height="14" viewBox="0 0 14 14"><rect x="0.4" y="0.4" width="13.2" height="13.2" rx="1" fill="#b6b6b6" stroke="#8f8f8f" stroke-width="0.8"/><rect x="0.4" y="0.4" width="13.2" height="2.9" fill="#7c7c7c"/><path d="M1 1.2 H13 M1.9 2.3 H13" stroke="#dcdcdc" stroke-width="0.9" stroke-dasharray="0.9 0.9"/><rect x="2.8" y="5.2" width="8.6" height="6" fill="#a8a8a8" stroke="#f6f6f6" stroke-width="1"/><rect x="4.6" y="7.1" width="5" height="2.2" fill="none" stroke="#f6f6f6" stroke-width="0.8"/></svg>
<div class="scene" style="top:155px">Me Scene</div>
<div class="sep" style="top:180px"></div>
<div class="tri r" style="left:9px;top:188.5px"></div>
<svg style="left:22px;top:186px" width="14" height="14" viewBox="0 0 14 14"><rect x="0.4" y="0.4" width="13.2" height="13.2" rx="1" fill="#b6b6b6" stroke="#8f8f8f" stroke-width="0.8"/><rect x="0.4" y="0.4" width="13.2" height="2.9" fill="#7c7c7c"/><path d="M1 1.2 H13 M1.9 2.3 H13" stroke="#dcdcdc" stroke-width="0.9" stroke-dasharray="0.9 0.9"/><rect x="2.8" y="5.2" width="8.6" height="6" fill="#a8a8a8" stroke="#f6f6f6" stroke-width="1"/><rect x="4.6" y="7.1" width="5" height="2.2" fill="none" stroke="#f6f6f6" stroke-width="0.8"/></svg>
<div class="scene" style="top:185px">View Controller Scene</div>
<div class="sep" style="top:210px"></div>
<div class="tri d" style="left:8px;top:220px"></div>
<svg style="left:22px;top:216px" width="14" height="14" viewBox="0 0 14 14"><rect x="0.4" y="0.4" width="13.2" height="13.2" rx="1" fill="#b6b6b6" stroke="#8f8f8f" stroke-width="0.8"/><rect x="0.4" y="0.4" width="13.2" height="2.9" fill="#7c7c7c"/><path d="M1 1.2 H13 M1.9 2.3 H13" stroke="#dcdcdc" stroke-width="0.9" stroke-dasharray="0.9 0.9"/><rect x="2.8" y="5.2" width="8.6" height="6" fill="#a8a8a8" stroke="#f6f6f6" stroke-width="1"/><rect x="4.6" y="7.1" width="5" height="2.2" fill="none" stroke="#f6f6f6" stroke-width="0.8"/></svg>
<div class="scene" style="top:215px">View Controller Scene</div>
<div class="tri d" style="left:24px;top:242px"></div>
<svg style="left:37px;top:237px" width="16" height="16" viewBox="0 0 16 16"><circle cx="8" cy="8" r="7.6" fill="#fcc916" stroke="#f4bd10" stroke-width="0.6"/><rect x="3.7" y="3.7" width="8.6" height="8.6" rx="0.6" fill="#fffdf4"/><rect x="3.9" y="3.9" width="8.2" height="8.2" fill="none" stroke="#fcc916" stroke-width="0.9" stroke-dasharray="0.9 1.1"/></svg>
<div class="orow" style="left:56.4px;top:237px">View Controller</div>
<svg style="left:53px;top:255px" width="16" height="16" viewBox="0 0 16 16"><rect x="0.5" y="0.5" width="15" height="15" fill="#e2e2e2" stroke="#cdcdcd" stroke-width="1"/><rect x="4.5" y="2.5" width="7" height="11" fill="#fdfdfd" stroke="#d0d0d0" stroke-width="0.6"/><path d="M4.5 3.6 H11.5" stroke="#6d9be0" stroke-width="0.8"/></svg>
<div class="orow" style="left:72.5px;top:255px">Top Layout Guide</div>
<svg style="left:53px;top:273px" width="16" height="16" viewBox="0 0 16 16"><rect x="0.5" y="0.5" width="15" height="15" fill="#e2e2e2" stroke="#cdcdcd" stroke-width="1"/><rect x="4.5" y="2.5" width="7" height="11" fill="#fdfdfd" stroke="#d0d0d0" stroke-width="0.6"/><path d="M4.5 12.4 H11.5" stroke="#6d9be0" stroke-width="0.8"/></svg>
<div class="orow" style="left:72.5px;top:273px">Bottom Layout Guide</div>
<div class="tri d" style="left:40px;top:296px"></div>
<svg style="left:53px;top:291px" width="16" height="16" viewBox="0 0 16 16"><rect x="0.5" y="0.5" width="15" height="15" fill="#e2e2e2" stroke="#cdcdcd" stroke-width="1"/><rect x="2.5" y="2.5" width="11" height="11" fill="#fdfdfd" stroke="#d0d0d0" stroke-width="0.8"/></svg>
<div class="orow" style="left:72.5px;top:291px">View</div>
<div class="abs" style="left:0;top:308px;width:269px;height:18px;background:#d6d6d6"></div>
<svg style="left:69px;top:309px" width="16" height="16" viewBox="0 0 16 16"><rect x="0.5" y="0.5" width="15" height="15" fill="#e2e2e2" stroke="#cdcdcd" stroke-width="1"/><rect x="2.5" y="2.5" width="11" height="11" fill="#fdfdfd" stroke="#d0d0d0" stroke-width="0.8"/></svg>
<div class="orow" style="left:88.5px;top:309px">Rainbow View</div>
<svg style="left:37.6px;top:327.2px" width="15.4" height="15.4" viewBox="0 0 16 16"><path d="M8 0.4 L15 3.6 V11.8 L8 15.6 L1 11.8 V3.6 Z" fill="#f4703a"/><path d="M1.3 3.9 L8 7 L14.7 3.9 M8 7 V15.3" fill="none" stroke="#f9a27c" stroke-width="0.8"/><path d="M3 6.9 L5.8 8.2 V12 L3 10.7 Z" fill="none" stroke="#f9b291" stroke-width="0.7"/><text x="11.4" y="12.6" font-family="Liberation Sans, sans-serif" font-weight="bold" font-size="7.5" fill="#fdeee6" text-anchor="middle" transform="skewY(-22) translate(0 4.6)">1</text></svg>
<div class="orow" style="left:56.4px;top:327px">First Responder</div>
<svg style="left:38px;top:346.3px" width="14" height="14" viewBox="0 0 16 16"><rect x="0" y="0" width="16" height="16" fill="#f4703a"/><rect x="3.2" y="3.8" width="7.6" height="8.4" rx="1" fill="none" stroke="#fde8dc" stroke-width="1.3"/><rect x="9.8" y="6" width="2.4" height="4" fill="#f4703a"/><path d="M7.6 8 H11.5" stroke="#fbd0bb" stroke-width="1.6"/><path d="M11 5.9 L14 8 L11 10.1 Z" fill="#fde8dc"/></svg>
<div class="orow" style="left:56.4px;top:345px">Exit</div>
<div class="sep" style="top:366.5px"></div>
<div class="tri r" style="left:9px;top:374.5px"></div>
<svg style="left:22px;top:372px" width="14" height="14" viewBox="0 0 14 14"><rect x="0.4" y="0.4" width="13.2" height="13.2" rx="1" fill="#b6b6b6" stroke="#8f8f8f" stroke-width="0.8"/><rect x="0.4" y="0.4" width="13.2" height="2.9" fill="#7c7c7c"/><path d="M1 1.2 H13 M1.9 2.3 H13" stroke="#dcdcdc" stroke-width="0.9" stroke-dasharray="0.9 0.9"/><path d="M3 8.2 L5.4 5.8 H11.4 V10.6 H5.4 Z" fill="#d8d8d8" stroke="#ececec" stroke-width="0.9" stroke-linejoin="round"/></svg>
<div class="scene" style="top:371px">Navigation Controller Scene</div>
</div>
<div class="vline" style="left:522px;top:66px;height:748px;background:#9c9c9c"></div>

<div id="canvas">
  <div class="abs" style="left:96px;top:50px;width:402px;height:720px;border:1px solid #727272;border-bottom:none;border-radius:5px 5px 0 0;background:#d6d6d6;overflow:hidden">
    <div class="abs" style="left:0;top:0;width:400px;height:30px;background:#fcfcfc"></div>
    <div class="abs" style="left:0;top:30px;width:400px;height:1px;background:#727272"></div>
  </div>
  <svg style="left:253px;top:58px" width="16" height="16" viewBox="0 0 16 16"><circle cx="8" cy="8" r="7.6" fill="#fcc916" stroke="#f4bd10" stroke-width="0.6"/><rect x="3.7" y="3.7" width="8.6" height="8.6" rx="0.6" fill="#fffdf4"/><rect x="3.9" y="3.9" width="8.2" height="8.2" fill="none" stroke="#fcc916" stroke-width="0.9" stroke-dasharray="0.9 1.1"/></svg>
  <svg style="left:289.8px;top:57.9px" width="15.6" height="15.6" viewBox="0 0 16 16"><path d="M8 0.4 L15 3.6 V11.8 L8 15.6 L1 11.8 V3.6 Z" fill="#f4703a"/><path d="M1.3 3.9 L8 7 L14.7 3.9 M8 7 V15.3" fill="none" stroke="#f9a27c" stroke-width="0.8"/><path d="M3 6.9 L5.8 8.2 V12 L3 10.7 Z" fill="none" stroke="#f9b291" stroke-width="0.7"/><text x="11.4" y="12.6" font-family="Liberation Sans, sans-serif" font-weight="bold" font-size="7.5" fill="#fdeee6" text-anchor="middle" transform="skewY(-22) translate(0 4.6)">1</text></svg>
  <svg style="left:328.1px;top:58.9px" width="14" height="14" viewBox="0 0 16 16"><rect x="0" y="0" width="16" height="16" fill="#f4703a"/><rect x="3.2" y="3.8" width="7.6" height="8.4" rx="1" fill="none" stroke="#fde8dc" stroke-width="1.3"/><rect x="9.8" y="6" width="2.4" height="4" fill="#f4703a"/><path d="M7.6 8 H11.5" stroke="#fbd0bb" stroke-width="1.6"/><path d="M11 5.9 L14 8 L11 10.1 Z" fill="#fde8dc"/></svg>
  <!-- battery -->
  <svg style="left:464px;top:87px" width="26" height="10" viewBox="0 0 26 10"><rect x="0.5" y="0.5" width="22.4" height="9" rx="1.8" fill="#ececec" stroke="#5a5a5a" stroke-width="1"/><rect x="2.2" y="2.2" width="19" height="5.6" rx="1" fill="#4a474a"/><path d="M24 3 Q25.2 3 25.2 4 V6 Q25.2 7 24 7 Z" fill="#4a474a"/></svg>
  <!-- rainbow view -->
  <div class="abs" style="left:158px;top:232.8px;width:279px;height:297px;border-radius:6px;background:#fbfbfb"></div>
  <svg style="left:158px;top:233px" width="279" height="297" viewBox="0 0 279 297">
    <circle cx="139.5" cy="148.45" r="107.3" fill="none" stroke="#e2e2e2" stroke-width="20.3"/>
    <circle cx="139.5" cy="148.45" r="75" fill="none" stroke="#cc30cd" stroke-width="19.7"/>
    <circle cx="139.5" cy="148.45" r="40.15" fill="none" stroke="#ff4e07" stroke-width="19.7"/>
  </svg>
  <!-- mouse pointer -->
  <svg style="left:369.3px;top:355.4px" width="14" height="20" viewBox="-1 -1 14 20"><path d="M0.3 0.6 V14.6 L3.5 11.6 L5.8 16.6 L8.2 15.5 L5.9 10.7 L10.6 10.5 Z" fill="#000" stroke="#fff" stroke-width="1.1" stroke-linejoin="round"/></svg>
</div>
<div class="vline" style="left:1173px;top:37px;height:777px;background:#9a9a9a"></div>

<div id="insp">
<div class="hdr" style="left:5.3px;top:2.0px">Rainbow View</div>
<div class="lab" style="left:-10.5px;width:90px;top:24.2px">First Color</div>
<div class="pop" style="left:84.2px;top:22px;width:172px;height:18px"></div>
<div class="abs" style="left:92.2px;top:26.7px;width:136.0px;height:8.6px;border:1px solid #111;background:#ff6a00"></div>
<svg style="left:240.3px;top:25.0px" width="8" height="12" viewBox="0 0 8 12"><path d="M1.2 4.4 L4 1.4 L6.8 4.4 M1.2 7.6 L4 10.6 L6.8 7.6" fill="none" stroke="#3c3c3c" stroke-width="1.2"/></svg>
<div class="abs" style="left:233.4px;top:23px;width:1px;height:16px;background:#d9d9d9"></div>
<div class="lab" style="left:-10.5px;width:90px;top:46.3px">Second Color</div>
<div class="pop" style="left:84.2px;top:44px;width:172px;height:18px"></div>
<div class="abs" style="left:92.2px;top:48.7px;width:136.0px;height:8.6px;border:1px solid #111;background:#dd4bdc"></div>
<svg style="left:240.3px;top:47.0px" width="8" height="12" viewBox="0 0 8 12"><path d="M1.2 4.4 L4 1.4 L6.8 4.4 M1.2 7.6 L4 10.6 L6.8 7.6" fill="none" stroke="#3c3c3c" stroke-width="1.2"/></svg>
<div class="abs" style="left:233.4px;top:45px;width:1px;height:16px;background:#d9d9d9"></div>
<div class="lab" style="left:-10.5px;width:90px;top:68.3px">Third Color</div>
<div class="pop" style="left:84.2px;top:66px;width:172px;height:18px"></div>
<div class="abs" style="left:92.2px;top:70.7px;width:136.0px;height:8.6px;border:1px solid #111;background:#e6e6e6"></div>
<svg style="left:240.3px;top:69.0px" width="8" height="12" viewBox="0 0 8 12"><path d="M1.2 4.4 L4 1.4 L6.8 4.4 M1.2 7.6 L4 10.6 L6.8 7.6" fill="none" stroke="#3c3c3c" stroke-width="1.2"/></svg>
<div class="abs" style="left:233.4px;top:67px;width:1px;height:16px;background:#d9d9d9"></div>
<div class="lab" style="left:-10.5px;width:90px;top:92.2px">Size</div>
<div class="fld" style="left:84.2px;top:89.3px;width:67.6px;height:18.5px;line-height:16.5px;color:#c4c4c4">--</div>
<svg style="left:153.3px;top:89.5px" width="10" height="19" viewBox="0 0 10 19"><rect x="0.5" y="0.5" width="9.4" height="18" rx="4.4" fill="#fdfdfd" stroke="#c8c8c8" stroke-width="1"/><path d="M2.8 7.6 L5 5.2 L7.2 7.6 M2.8 11.4 L5 13.8 L7.2 11.4" fill="none" stroke="#4e4e4e" stroke-width="1.1"/></svg>
<div class="fld" style="left:172px;top:89.3px;width:67.7px;height:18.5px;line-height:16.5px;color:#c4c4c4">--</div>
<svg style="left:241.5px;top:89.5px" width="10" height="19" viewBox="0 0 10 19"><rect x="0.5" y="0.5" width="9.4" height="18" rx="4.4" fill="#fdfdfd" stroke="#c8c8c8" stroke-width="1"/><path d="M2.8 7.6 L5 5.2 L7.2 7.6 M2.8 11.4 L5 13.8 L7.2 11.4" fill="none" stroke="#4e4e4e" stroke-width="1.1"/></svg>
<div class="lab2" style="left:78.7px;width:80px;text-align:center;top:107.3px">Width</div>
<div class="lab2" style="left:163.2px;width:80px;text-align:center;top:107.3px">Height</div>
<div class="isep" style="left:0px;top:126px;width:251px"></div>
<div class="hdr" style="left:5.3px;top:129.0px">View</div>
<div class="lab" style="left:-10.5px;width:90px;top:152.8px">Corner Radius</div>
<div class="fld" style="left:84.2px;top:150.2px;width:155.5px;height:18.6px;line-height:16.6px">0</div>
<svg style="left:241.5px;top:150.0px" width="10" height="19" viewBox="0 0 10 19"><rect x="0.5" y="0.5" width="9.4" height="18" rx="4.4" fill="#fdfdfd" stroke="#c8c8c8" stroke-width="1"/><path d="M2.8 7.6 L5 5.2 L7.2 7.6 M2.8 11.4 L5 13.8 L7.2 11.4" fill="none" stroke="#4e4e4e" stroke-width="1.1"/></svg>
<div class="isep" style="left:0px;top:174px;width:251px"></div>
<div class="hdr" style="left:5.3px;top:177.0px">View</div>
<div class="lab" style="left:-10.5px;width:90px;top:200.2px">Mode</div>
<div class="pop" style="left:84.2px;top:198px;width:172px;height:18px"></div>
<div class="lab2" style="left:92.2px;top:199.5px;font-size:11.5px;line-height:15px">Scale To Fill</div>
<svg style="left:240.3px;top:201.0px" width="8" height="12" viewBox="0 0 8 12"><path d="M1.2 4.4 L4 1.4 L6.8 4.4 M1.2 7.6 L4 10.6 L6.8 7.6" fill="none" stroke="#3c3c3c" stroke-width="1.2"/></svg>
<div class="lab" style="left:-10.5px;width:90px;top:222.2px">Semantic</div>
<div class="pop" style="left:84.2px;top:220px;width:172px;height:18px"></div>
<div class="lab2" style="left:92.2px;top:221.5px;font-size:11.5px;line-height:15px">Unspecified</div>
<svg style="left:240.3px;top:223.0px" width="8" height="12" viewBox="0 0 8 12"><path d="M1.2 4.4 L4 1.4 L6.8 4.4 M1.2 7.6 L4 10.6 L6.8 7.6" fill="none" stroke="#3c3c3c" stroke-width="1.2"/></svg>
<div class="lab" style="left:-10.5px;width:90px;top:244.6px">Tag</div>
<div class="fld" style="left:84.2px;top:242.2px;width:155.5px;height:18.6px;line-height:16.6px">0</div>
<svg style="left:241.5px;top:242.0px" width="10" height="19" viewBox="0 0 10 19"><rect x="0.5" y="0.5" width="9.4" height="18" rx="4.4" fill="#fdfdfd" stroke="#c8c8c8" stroke-width="1"/><path d="M2.8 7.6 L5 5.2 L7.2 7.6 M2.8 11.4 L5 13.8 L7.2 11.4" fill="none" stroke="#4e4e4e" stroke-width="1.1"/></svg>
<div class="isep" style="left:8px;top:265.7px;width:243px"></div>
<div class="lab" style="left:-10.5px;width:90px;top:271.3px">Interaction</div>
<div class="cb" style="left:84.7px;top:272.0px"></div>
<svg style="left:84.2px;top:271.5px" width="12" height="12" viewBox="0 0 12 12"><path d="M2.8 6.4 L5 9 L9.2 2.8" fill="none" stroke="#3e3e3e" stroke-width="1.2"/></svg>
<div class="lab2" style="left:101.1px;top:270.0px;font-size:11.7px;line-height:15px">User Interaction Enabled</div>
<div class="cb" style="left:84.7px;top:290.0px"></div>
<div class="lab2" style="left:101.1px;top:288.0px;font-size:11.7px;line-height:15px">Multiple Touch</div>
<div class="isep" style="left:8px;top:307.2px;width:243px"></div>
<div class="lab" style="left:-10.5px;width:90px;top:315.6px">Alpha</div>
<div class="fld" style="left:84.2px;top:312.8px;width:155.5px;height:18.4px;line-height:16.4px">1</div>
<svg style="left:241.5px;top:313.0px" width="10" height="19" viewBox="0 0 10 19"><rect x="0.5" y="0.5" width="9.4" height="18" rx="4.4" fill="#fdfdfd" stroke="#c8c8c8" stroke-width="1"/><path d="M2.8 7.6 L5 5.2 L7.2 7.6 M2.8 11.4 L5 13.8 L7.2 11.4" fill="none" stroke="#4e4e4e" stroke-width="1.1"/></svg>
<div class="lab" style="left:-10.5px;width:90px;top:337.2px">Background</div>
<div class="pop" style="left:84.2px;top:335px;width:172px;height:18px"></div>
<div class="abs" style="left:92.2px;top:340.2px;width:28.2px;height:7.6px;border:1px solid #111;background:#ffffff"></div>
<div class="lab2" style="left:131.8px;top:336.5px;font-size:11.5px;line-height:15px">White Color</div>
<svg style="left:240.3px;top:338.0px" width="8" height="12" viewBox="0 0 8 12"><path d="M1.2 4.4 L4 1.4 L6.8 4.4 M1.2 7.6 L4 10.6 L6.8 7.6" fill="none" stroke="#3c3c3c" stroke-width="1.2"/></svg>
<div class="abs" style="left:125.2px;top:336px;width:1px;height:16px;background:#d9d9d9"></div>
<div class="lab" style="left:-10.5px;width:90px;top:359.2px">Tint</div>
<div class="pop" style="left:84.2px;top:357px;width:172px;height:18px"></div>
<div class="abs" style="left:92.2px;top:362.2px;width:28.2px;height:7.6px;border:1px solid #111;background:#0d8cf8"></div>
<div class="lab2" style="left:131.8px;top:358.5px;font-size:11.5px;line-height:15px">Default</div>
<svg style="left:240.3px;top:360.0px" width="8" height="12" viewBox="0 0 8 12"><path d="M1.2 4.4 L4 1.4 L6.8 4.4 M1.2 7.6 L4 10.6 L6.8 7.6" fill="none" stroke="#3c3c3c" stroke-width="1.2"/></svg>
<div class="abs" style="left:125.2px;top:358px;width:1px;height:16px;background:#d9d9d9"></div>
<div class="isep" style="left:8px;top:380.2px;width:243px"></div>
<div class="lab" style="left:-10.5px;width:90px;top:385px">Drawing</div>
<div class="cb" style="left:84.7px;top:385.6px"></div>
<svg style="left:84.2px;top:385.1px" width="12" height="12" viewBox="0 0 12 12"><path d="M2.8 6.4 L5 9 L9.2 2.8" fill="none" stroke="#3e3e3e" stroke-width="1.2"/></svg>
<div class="lab2" style="left:101.1px;top:383.6px;font-size:11.7px;line-height:15px">Opaque</div>
<div class="cb" style="left:172.4px;top:385.6px"></div>
<div class="lab2" style="left:188.8px;top:383.6px;font-size:11.7px;line-height:15px">Hidden</div>
<div class="cb" style="left:84.7px;top:403.6px"></div>
<svg style="left:84.2px;top:403.1px" width="12" height="12" viewBox="0 0 12 12"><path d="M2.8 6.4 L5 9 L9.2 2.8" fill="none" stroke="#3e3e3e" stroke-width="1.2"/></svg>
<div class="lab2" style="left:101.1px;top:401.6px;font-size:11.7px;line-height:15px">Clears Graphics Context</div>
<div class="cb" style="left:84.7px;top:421.6px"></div>
<div class="lab2" style="left:101.1px;top:419.6px;font-size:11.7px;line-height:15px">Clip Subviews</div>
<div class="cb" style="left:84.7px;top:439.6px"></div>
<svg style="left:84.2px;top:439.1px" width="12" height="12" viewBox="0 0 12 12"><path d="M2.8 6.4 L5 9 L9.2 2.8" fill="none" stroke="#3e3e3e" stroke-width="1.2"/></svg>
<div class="lab2" style="left:101.1px;top:437.6px;font-size:11.7px;line-height:15px">Autoresize Subviews</div>
<div class="isep" style="left:8px;top:457.4px;width:243px"></div>
<div class="lab" style="left:-10.5px;width:90px;top:465.2px">Stretching</div>
<div class="fld" style="left:84.2px;top:462.3px;width:67.6px;height:18.6px;line-height:16.6px">0</div>
<svg style="left:153.6px;top:462.1px" width="10" height="19" viewBox="0 0 10 19"><rect x="0.5" y="0.5" width="9.4" height="18" rx="4.4" fill="#fdfdfd" stroke="#c8c8c8" stroke-width="1"/><path d="M2.8 7.6 L5 5.2 L7.2 7.6 M2.8 11.4 L5 13.8 L7.2 11.4" fill="none" stroke="#4e4e4e" stroke-width="1.1"/></svg>
<div class="fld" style="left:172px;top:462.3px;width:67.7px;height:18.6px;line-height:16.6px">0</div>
<svg style="left:241.7px;top:462.1px" width="10" height="19" viewBox="0 0 10 19"><rect x="0.5" y="0.5" width="9.4" height="18" rx="4.4" fill="#fdfdfd" stroke="#c8c8c8" stroke-width="1"/><path d="M2.8 7.6 L5 5.2 L7.2 7.6 M2.8 11.4 L5 13.8 L7.2 11.4" fill="none" stroke="#4e4e4e" stroke-width="1.1"/></svg>
<div class="lab2" style="left:78px;width:80px;text-align:center;top:479.4px">X</div>
<div class="lab2" style="left:165.4px;width:80px;text-align:center;top:479.4px">Y</div>
<div class="fld" style="left:84.2px;top:498.3px;width:67.6px;height:18.4px;line-height:16.4px">1</div>
<svg style="left:153.6px;top:498.0px" width="10" height="19" viewBox="0 0 10 19"><rect x="0.5" y="0.5" width="9.4" height="18" rx="4.4" fill="#fdfdfd" stroke="#c8c8c8" stroke-width="1"/><path d="M2.8 7.6 L5 5.2 L7.2 7.6 M2.8 11.4 L5 13.8 L7.2 11.4" fill="none" stroke="#4e4e4e" stroke-width="1.1"/></svg>
<div class="fld" style="left:172px;top:498.3px;width:67.7px;height:18.4px;line-height:16.4px">1</div>
<svg style="left:241.7px;top:498.0px" width="10" height="19" viewBox="0 0 10 19"><rect x="0.5" y="0.5" width="9.4" height="18" rx="4.4" fill="#fdfdfd" stroke="#c8c8c8" stroke-width="1"/><path d="M2.8 7.6 L5 5.2 L7.2 7.6 M2.8 11.4 L5 13.8 L7.2 11.4" fill="none" stroke="#4e4e4e" stroke-width="1.1"/></svg>
<div class="lab2" style="left:78px;width:80px;text-align:center;top:515.2px">Width</div>
<div class="lab2" style="left:166px;width:80px;text-align:center;top:515.2px">Height</div>
<div class="isep" style="left:0px;top:531px;width:251px"></div>
<svg style="left:78.5px;top:539px" width="12" height="14" viewBox="0 0 12 14"><path d="M0.8 0.8 H7.2 L11.2 4.8 V13.2 H0.8 Z M7.2 0.8 V4.8 H11.2" fill="none" stroke="#d4d4d4" stroke-width="1.1" stroke-linejoin="round"/></svg>
<div class="lab2" style="left:108.3px;top:537.3px;font-size:14.5px;color:#d0d0d0;letter-spacing:1.6px;line-height:16px">{}</div>
<svg style="left:136.8px;top:538.8px" width="15" height="15" viewBox="0 0 15 15"><circle cx="7.5" cy="7.5" r="6.6" fill="#eef4fe" stroke="#7aaef6" stroke-width="1.2"/><rect x="4.9" y="4.9" width="5.2" height="5.2" rx="0.8" fill="none" stroke="#7aaef6" stroke-width="1.1"/></svg>
<svg style="left:167px;top:540px" width="14" height="12" viewBox="0 0 14 12"><rect x="0.6" y="0.6" width="12.8" height="10.8" rx="1" fill="none" stroke="#d4d4d4" stroke-width="1.1"/><path d="M3.4 0.6 V11.4 M10.6 0.6 V11.4" stroke="#d4d4d4" stroke-width="1"/></svg>
<div class="isep" style="left:0px;top:559.8px;width:251px"></div>
<svg style="left:9.2px;top:570.2px" width="44" height="44" viewBox="0 0 44 44"><circle cx="22" cy="22" r="21.8" fill="#fcc81e"/><rect x="9.5" y="9.5" width="25" height="25" rx="2" fill="#fdd95e" stroke="#fbe08a" stroke-width="0.6"/><rect x="12" y="12" width="20" height="20" fill="#fdfcf6" stroke="#fff" stroke-width="1.2" stroke-dasharray="1.6 1.2"/></svg>
<div class="lab2 lib" style="left:60px;top:577.5px"><b>View Controller</b> - A controller that</div>
<div class="lab2 lib" style="left:60px;top:590.8px">manages a view.</div>
<div class="isep" style="left:4px;top:623px;width:247px"></div>
<svg style="left:9.2px;top:632.7px" width="44" height="44" viewBox="0 0 44 44"><circle cx="22" cy="22" r="21.3" fill="none" stroke="#f0b62a" stroke-width="1.1" stroke-dasharray="3.6 2.2"/><rect x="10.5" y="10.5" width="23" height="23" fill="none" stroke="#f0b62a" stroke-width="1.1" stroke-dasharray="3.6 2.2"/></svg>
<div class="lab2 lib" style="left:60px;top:634.8px"><b>Storyboard Reference</b> - Provides a</div>
<div class="lab2 lib" style="left:60px;top:648.0px">placeholder for a view controller in an</div>
<div class="lab2 lib" style="left:60px;top:661.2px">external storyboard.</div>
<div class="isep" style="left:4px;top:686.3px;width:247px"></div>
<svg style="left:9.2px;top:696px" width="44" height="44" viewBox="0 0 44 44"><circle cx="22" cy="22" r="21.8" fill="#fcc81e"/><path d="M27 11 L15 22 L27 33" fill="none" stroke="#2f7fe6" stroke-width="3.2"/></svg>
<div class="lab2 lib" style="left:60px;top:698.1px"><b>Navigation Controller</b> - A</div>
<div class="lab2 lib" style="left:60px;top:711.3px">controller that manages navigation</div>
<div class="lab2 lib" style="left:60px;top:724.3px">through a hierarchy of views.</div>
<div class="isep" style="left:0px;top:747px;width:251px"></div>
</div>

</body>
</html>
